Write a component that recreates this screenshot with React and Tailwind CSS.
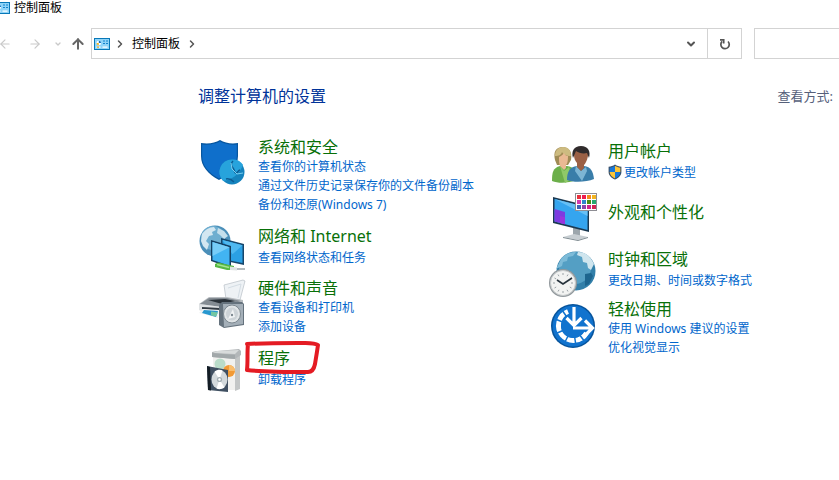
import { ArrowLeft, ArrowRight, ArrowUp, ChevronDown, ChevronRight } from 'lucide-react';

function PanelIcon({ className, viewBox = '0 0 16 12' }) {
  return (
    <svg viewBox={viewBox} className={className} aria-hidden="true">
      <rect x="0.5" y="0.5" width="15" height="11" fill="#8fd4f8" stroke="#0878b8" />
      <circle cx="4.8" cy="5" r="2.3" fill="#fff" />
      <path d="M4.8 5V2.7A2.3 2.3 0 0 1 7.1 5z" fill="#0d6fc0" />
      <path d="M4.8 5H2.5a2.3 2.3 0 0 0 2.3 2.3z" fill="#f3b51e" />
      <path d="M9 3h2M12 3h2M9 5.5h2M12 5.5h2" stroke="#1583cc" strokeWidth="1.2" />
      <path d="M2.5 9.2h4M8.5 9.2h5" stroke="#fff" strokeWidth="1.2" />
      <path d="M3 9.2h2" stroke="#e5a71b" strokeWidth="1.2" />
    </svg>
  );
}

function RefreshIcon() {
  return (
    <svg viewBox="0 0 12 12" className="size-3" fill="none" stroke="#555" strokeWidth="1.7" aria-hidden="true">
      <path d="M3.2 3.4A4.2 4.2 0 1 0 9 3.5" />
      <path d="M1 1.8h3.7v3.7" />
    </svg>
  );
}

function UacShield() {
  return (
    <svg viewBox="0 0 14 16" className="h-4 w-3.5 shrink-0" aria-hidden="true">
      <path d="M7 .5C5 2 3 2.6.6 2.7V8c0 3.6 3 6.2 6.4 7.6C10.4 14.2 13.4 11.6 13.4 8V2.7C11 2.6 9 2 7 .5z" fill="#3a5068" />
      <path d="M7 1.8C5.3 3 3.6 3.5 1.7 3.7V8H7z" fill="#1877d8" />
      <path d="M7 1.8C8.7 3 10.4 3.5 12.3 3.7V8H7z" fill="#fdc536" />
      <path d="M1.7 8c0 3 2.3 5.2 5.3 6.4V8z" fill="#fdc536" />
      <path d="M12.3 8c0 3-2.3 5.2-5.3 6.4V8z" fill="#1877d8" />
    </svg>
  );
}

function SecurityIcon() {
  return (
    <>
      <path d="M22 3C17 6 11 7 3 6v13c0 10 7 18 18 24 11-6 19-14 19-24V6C33 7 27 6 22 3z" fill="#07569f" />
      <path d="M22 4.5C17 7.2 11 8.2 4.2 7.4V19c0 9.4 6.3 16.8 16.8 22.5C31.5 36 38.8 28.4 38.8 19V7.4C33 8.2 27 7.2 22 4.5z" fill="#0f6fcb" />
      <circle cx="34" cy="35" r="12.5" fill="#1583bd" />
      <path d="M34 22.5a12.5 12.5 0 0 0-9 21.2c8 0 17-7 20-16a12.5 12.5 0 0 0-11-5.2z" fill="#27a3dc" />
      <path d="M35 24c-2 2-2 5 0 7s1 5 3 5 2-3 4-3M28 42c4-1 6 1 8 3" fill="none" stroke="#0d5c93" strokeWidth="1.5" />
      <path d="M33 26l1 6 5 5 6-1" fill="none" stroke="#7bcff0" />
    </>
  );
}

function NetworkIcon() {
  return (
    <>
      <circle cx="17" cy="19" r="15.5" fill="#4b8fb9" />
      <circle cx="15" cy="16" r="12" fill="#6eaed0" />
      <path d="M4 12c3-4 7-7 12-7l2 3-4 2 1 3-4 1-3 5 3 3-2 6-4-4-2-5z" fill="#d3e7f1" />
      <path d="M20 6l6 3 4 5-4 3-4-4-3-2z" fill="#c5dfec" />
      <path d="M23 16l23 6v21l-23-5z" fill="#17466b" />
      <path d="M24.5 18l20 5.3v17.8l-20-4z" fill="#2ba0e4" />
      <path d="M24.5 18l20 5.3-10 9z" fill="#4fb8f0" />
      <path d="M13 18l20 6v22l-20-7z" fill="#143f62" />
      <path d="M14.5 20l17 5.2v18.5l-17-5.8z" fill="#42b4f2" />
      <path d="M14.5 20l17 5.2-17 8.8z" fill="#77cdf8" />
      <path d="M17 42l3-1.5L36 44v4h-7l-12-3z" fill="#56b843" />
      <path d="M19 42.5l12 3" stroke="#a5e390" strokeWidth="1.5" />
      <path d="M32 44.5l7 1v3l-7-.5z" fill="#dfe3e3" />
      <path d="M39 47h8" stroke="#9aa5a8" strokeWidth="1.5" />
    </>
  );
}

function HardwareIcon() {
  return (
    <g transform="translate(0 1)">
      <path d="M26 6L45 1l2 1-5 19-14-1z" fill="#eef2f5" stroke="#b8bfc5" strokeWidth="0.7" />
      <path d="M30 9l13-4-3 14" fill="none" stroke="#d4dde4" />
      <path d="M1 25l10-7h18l16 3v11L24 35 1 31z" fill="#b9bec2" />
      <path d="M2 25l9-6h18l14 3-19 6z" fill="#848c93" />
      <path d="M10 21l17-1 10 2-13 3z" fill="#2b333a" />
      <path d="M1 25l23 3v7L1 31z" fill="#dfe2e4" />
      <path d="M4 28l18 1v3L4 30z" fill="#333c44" />
      <path d="M5 30l17 1-2 8L1 34z" fill="#f0f3f5" />
      <path d="M6 31l14 1-2 6-14-4z" fill="#2797cf" />
      <path d="M13 32.500l7 1-2 4-5-1z" fill="#73c6a2" />
      <path d="M21 26l3-3h20l2 2v21l-20 3-5-3z" fill="#65727d" />
      <path d="M25 25h20v20l-19 3z" fill="#a4afb8" />
      <ellipse cx="34" cy="35" rx="8.5" ry="9" fill="#e1e5e7" stroke="#7d8890" />
      <ellipse cx="34" cy="35" rx="6" ry="6.5" fill="#cdd3d7" />
      <path d="M30 40l5-10 2 8z" fill="#f2f4f5" />
      <circle cx="34" cy="36" r="1.2" fill="#7e8a92" />
    </g>
  );
}

function ProgramsIcon() {
  return (
    <g transform="translate(0 1)">
      <path d="M15 12h22v33H15z" fill="#f1f1ef" />
      <path d="M37 12l5-4v36l-5 2z" fill="#c3c6c6" />
      <path d="M14 7l5-1 22-2 2 2v4l-6 4-23-2z" fill="#b3b7b9" />
      <path d="M19 6l22-1-4 4-22-1z" fill="#d8dbdb" />
      <path d="M14 8l23 2v4l-23-2z" fill="#a2a8aa" />
      <circle cx="22" cy="19" r="5.5" fill="#b9dcca" />
      <circle cx="31" cy="26" r="6" fill="#f29a35" />
      <path d="M31 26v-6a6 6 0 0 1 6 6z" fill="#f9bd6d" />
      <path d="M9 21l21 4v22L10 45z" fill="#405062" />
      <path d="M9 21l3 1 1 23.5-3-.5z" fill="#131c24" />
      <ellipse cx="21.5" cy="34.5" rx="8" ry="9.5" fill="#d3d9dc" />
      <path d="M21.5 34.5l-5-8c3-2 6-2 8-1zM21.5 34.5l5 8c-3 2-6 2-8 1z" fill="#fff" />
      <circle cx="21.5" cy="34.5" r="2.6" fill="#a3afb4" />
      <circle cx="21.5" cy="34.5" r="1.2" fill="#fff" />
    </g>
  );
}

function UsersIcon() {
  return (
    <>
      <path d="M4 44c0-9 1-13 8-15h7c7 1 9 5 9 14-7 3-17 4-24 1z" fill="#6caf4a" />
      <path d="M12 29l4 5 5-4 3 12-7 4z" fill="#8fc968" />
      <path d="M7 23c-2-8 1-13 7.5-13s10 5 8.5 13l-3 5H9z" fill="#a08b55" />
      <path d="M7 19c0-6 4-9 8-9 5 0 8 3 8 9-5 0-8-2-9-4-1 3-3 4-7 4z" fill="#cdbb80" />
      <path d="M11 20c3-1 4-3 5-4 1 2 2 3 4 3 0 6-1 8-2 9v3l-2 2-4-4c-1-3-1-5-1-9z" fill="#eab993" />
      <path d="M19 43c0-9 3-13 10-14h7c7 1 9 5 10 13-7 3-20 4-27 1z" fill="#397da9" />
      <path d="M28 29l5 5 5-4 1 4-5 10-7-10z" fill="#7db5d4" />
      <path d="M26 18c0-6 3-8 7-8s8 3 7 9c-1 5-3 8-4 9v3l-3 3-4-4v-4c-2-2-3-5-3-8z" fill="#9b6045" />
      <path d="M25 21c-2-7 1-12 8-12s10 5 8 12l-2-5c-4 1-8 0-11-2z" fill="#302b2c" />
    </>
  );
}

const SWATCHES = [
  ['#e9303c', '#ee1d50', '#f58a1c', '#f3b41f'],
  ['#d23ab0', '#2f86cb', '#498c14', '#25a86f'],
  ['#3f60b4', '#8d45aa', '#d0248a', '#d32352'],
];

function AppearanceIcon() {
  return (
    <g transform="translate(0 1)">
      <path d="M25 34l7 2v9l-7-1z" fill="#9ca6ac" />
      <path d="M15 45l11-3 14 3-10 3z" fill="#c7ced2" />
      <path d="M15 45l15 3 10-3v1l-10 3-15-3z" fill="#7f8b91" />
      <path d="M5 5l36 9v26L5 31z" fill="#1b3850" />
      <path d="M6.5 7l33 8.500V38l-33-8.500z" fill="#35a5ef" />
      <path d="M6.5 7l33 8.500V24z" fill="#66c0f6" />
      <path d="M6.5 17L17 20v12.200L6.5 29.500z" fill="#7d3be0" />
      <path d="M12 24l5 1.300v6.900l-5-1.300z" fill="#9a35dc" />
      <rect x="27.5" y="1.5" width="21" height="17" fill="#fff" stroke="#8e8e94" />
      {SWATCHES.map((row, y) =>
        row.map((color, x) => (
          <rect key={`${x}-${y}`} x={29 + x * 5} y={3 + y * 5} width="4" height="4" fill={color} />
        ))
      )}
    </g>
  );
}

function ClockIcon() {
  return (
    <>
      <circle cx="28" cy="26" r="19.5" fill="#327fa9" />
      <circle cx="27" cy="23" r="16" fill="#549fc4" />
      <path d="M13 14c5-6 10-7 15-7l-3 4-5 1-1 4-4 1-1 4-6 3z" fill="#7dbbd8" />
      <path d="M30 7c8 0 13 5 16 12l-3 6-3-2-1-5-4-1-1-5-5-2z" fill="#cfe5ee" />
      <path d="M37 29l6-1 2 3-4 8-4 2z" fill="#1d658f" />
      <circle cx="15" cy="38" r="14" fill="#92999d" />
      <circle cx="15" cy="38" r="12.5" fill="#f2f3f2" stroke="#c7cbcc" />
      <path d="M15 28v2M15 46v2M5 38h2M23 38h2M10 29.500l1 1.700M20 29.500l-1 1.700M6.500 33l1.700 1M23.500 33l-1.700 1M6.500 43l1.700-1M23.500 43l-1.700-1M10 46.500l1-1.700M20 46.500l-1-1.700" stroke="#9aa2a6" />
      <path d="M9 35l6 4 9-6" fill="none" stroke="#26323b" strokeWidth="1.6" />
    </>
  );
}

function EaseIcon() {
  return (
    <>
      <circle cx="25" cy="27" r="22" fill="#07549c" />
      <circle cx="25" cy="27" r="20.5" fill="#1173ce" />
      <path d="M20 12.500A15 15 0 1 0 38.500 34" fill="none" stroke="#fff" strokeWidth="5" />
      <path d="M25 27L14 11M25 27L7 20M25 27L7 35M25 27L16 45M25 27l3 20M25 27l12 16" stroke="#1173ce" strokeWidth="1.5" />
      <circle cx="25" cy="27" r="12" fill="#1173ce" />
      <path d="M26 8v18M18.500 19l7.500 7.500 7.500-7.500" fill="none" stroke="#fff" strokeWidth="3.2" />
      <path d="M25 29h19M37 21.500l7.500 7.500-7.500 7.500" fill="none" stroke="#fff" strokeWidth="3.2" />
    </>
  );
}

const LEFT = [
  { title: '系统和安全', icon: SecurityIcon, links: ['查看你的计算机状态', '通过文件历史记录保存你的文件备份副本', '备份和还原(Windows 7)'] },
  { title: '网络和 Internet', icon: NetworkIcon, links: ['查看网络状态和任务'] },
  { title: '硬件和声音', icon: HardwareIcon, links: ['查看设备和打印机', '添加设备'] },
  { title: '程序', icon: ProgramsIcon, links: ['卸载程序'], marked: true },
];

const RIGHT = [
  { title: '用户帐户', icon: UsersIcon, links: ['更改帐户类型'], shield: true },
  { title: '外观和个性化', icon: AppearanceIcon, links: [] },
  { title: '时钟和区域', icon: ClockIcon, links: ['更改日期、时间或数字格式'] },
  { title: '轻松使用', icon: EaseIcon, links: ['使用 Windows 建议的设置', '优化视觉显示'] },
];

// hand-drawn red frame around a category title
function RedMark() {
  return (
    <svg viewBox="0 0 76 36" className="pointer-events-none absolute -left-3.5 -top-2 h-9 w-[76px]" aria-hidden="true">
      <path
        d="M4 4c-1 8 0 17-1 26 18 2 42 2 61 2 4 0 6-3 7-8 1-6 2-12 3-19-4-3-12-2-20-2C37 3 20 3 3 4"
        fill="none"
        stroke="#e41b23"
        strokeWidth="4"
        strokeLinecap="round"
        strokeLinejoin="round"
      />
    </svg>
  );
}

function Category({ title, icon: Icon, links, shield, marked }) {
  return (
    <section className="flex min-h-12 gap-3">
      <svg viewBox="0 0 48 48" className="size-12 shrink-0 overflow-visible" aria-hidden="true">
        <Icon />
      </svg>
      <div className={`flex flex-col ${links.length < 2 ? 'justify-center gap-0.5' : ''} ${links.length === 0 ? 'pb-1.5' : ''}`}>
        <h2 className="relative text-base leading-5 text-[#087008]">
          <a href="#" className="hover:underline">{title}</a>
          {marked && <RedMark />}
        </h2>
        {links.length > 0 && (
          <ul className="text-xs leading-[19px] text-[#0066cc]">
            {links.map((link) => (
              <li key={link}>
                <a href="#" className="flex items-center gap-0.5 whitespace-nowrap hover:underline">
                  {shield && <UacShield />}
                  {link}
                </a>
              </li>
            ))}
          </ul>
        )}
      </div>
    </section>
  );
}

export default function App() {
  return (
    <div className="min-h-screen overflow-hidden bg-white font-['Noto_Sans','Noto_Sans_CJK_SC',sans-serif] text-xs text-black">
      <header className="flex h-4 items-center gap-1">
        <PanelIcon viewBox="6 0 10 12" className="h-3 w-2.5" />
        <h1 className="leading-4">控制面板</h1>
      </header>

      <div className="mt-3 flex items-center">
        <nav className="flex w-[91px] shrink-0 items-center text-[#c9c9c9]">
          <button type="button" aria-label="后退" className="-ml-0.5 mr-4"><ArrowLeft className="size-3.5" strokeWidth={2} /></button>
          <button type="button" aria-label="前进" className="mr-3"><ArrowRight className="size-3.5" strokeWidth={2} /></button>
          <button type="button" aria-label="最近位置" className="mr-2"><ChevronDown className="size-2" strokeWidth={4} /></button>
          <button type="button" aria-label="向上" className="text-[#666]"><ArrowUp className="size-4" strokeWidth={3} /></button>
        </nav>
        <div className="flex h-[31px] flex-1 items-center border border-[#d3d3d3]">
          <PanelIcon className="ml-0.5 h-3 w-4" />
          <ChevronRight className="ml-1 size-3 text-[#555]" strokeWidth={3} />
          <a href="#" className="mx-1.5 leading-4">控制面板</a>
          <ChevronRight className="size-3 text-[#555]" strokeWidth={3} />
          <button type="button" aria-label="以前的位置" className="ml-auto mr-2.5">
            <ChevronDown className="size-3 text-[#555]" strokeWidth={4} />
          </button>
          <button type="button" aria-label="刷新" className="flex h-full w-[34px] items-center justify-center border-l border-[#d3d3d3]">
            <RefreshIcon />
          </button>
        </div>
        <input type="search" aria-label="搜索控制面板" className="ml-3 h-[31px] w-[85px] border border-r-0 border-[#d3d3d3] px-2 outline-none" />
      </div>

      <main className="pl-[198px] pt-[27px]">
        <div className="flex items-center justify-between">
          <h2 className="text-base leading-5 text-[#003399]">调整计算机的设置</h2>
          <span className="pr-1.5 text-[13px] leading-5 text-[#56607a]">查看方式:</span>
        </div>
        <div className="mt-[31px] grid grid-cols-[350px_1fr]">
          <div className="flex flex-col gap-2">
            {LEFT.map((item) => <Category key={item.title} {...item} />)}
          </div>
          <div className="flex flex-col gap-1.5">
            {RIGHT.map((item) => <Category key={item.title} {...item} />)}
          </div>
        </div>
      </main>
    </div>
  );
}
